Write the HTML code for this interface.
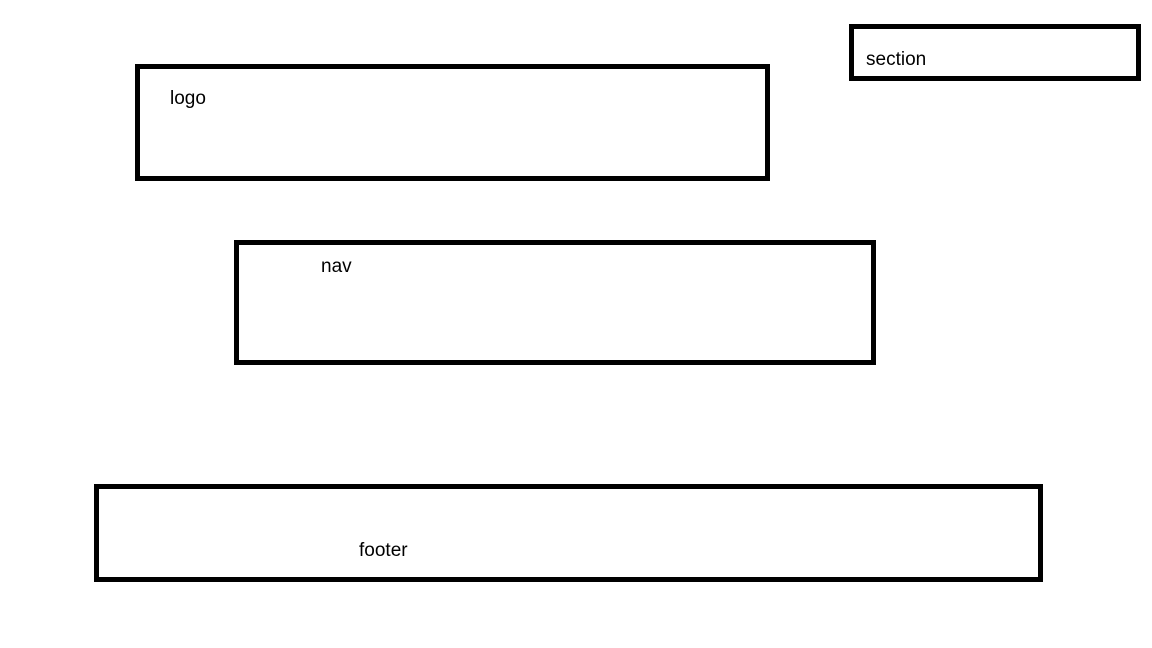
<!DOCTYPE html>
<html><head><meta charset="utf-8"><style>
html,body{margin:0;padding:0;width:1152px;height:648px;background:#fff;overflow:hidden;position:relative}
.b{position:absolute;border:5px solid #000;box-sizing:border-box}
.t{position:absolute;font-family:"Liberation Sans",sans-serif;font-size:19px;line-height:19px;color:#000}
</style></head><body>
<div class="b" style="left:849px;top:24px;width:292px;height:57px"></div>
<div class="b" style="left:135px;top:64px;width:635px;height:117px"></div>
<div class="b" style="left:234px;top:240px;width:642px;height:125px"></div>
<div class="b" style="left:94px;top:484px;width:949px;height:98px"></div>
<div class="t" style="left:866px;top:50px">section</div>
<div class="t" style="left:170px;top:89px">logo</div>
<div class="t" style="left:321px;top:257px">nav</div>
<div class="t" style="left:359px;top:541px">footer</div>
</body></html>
